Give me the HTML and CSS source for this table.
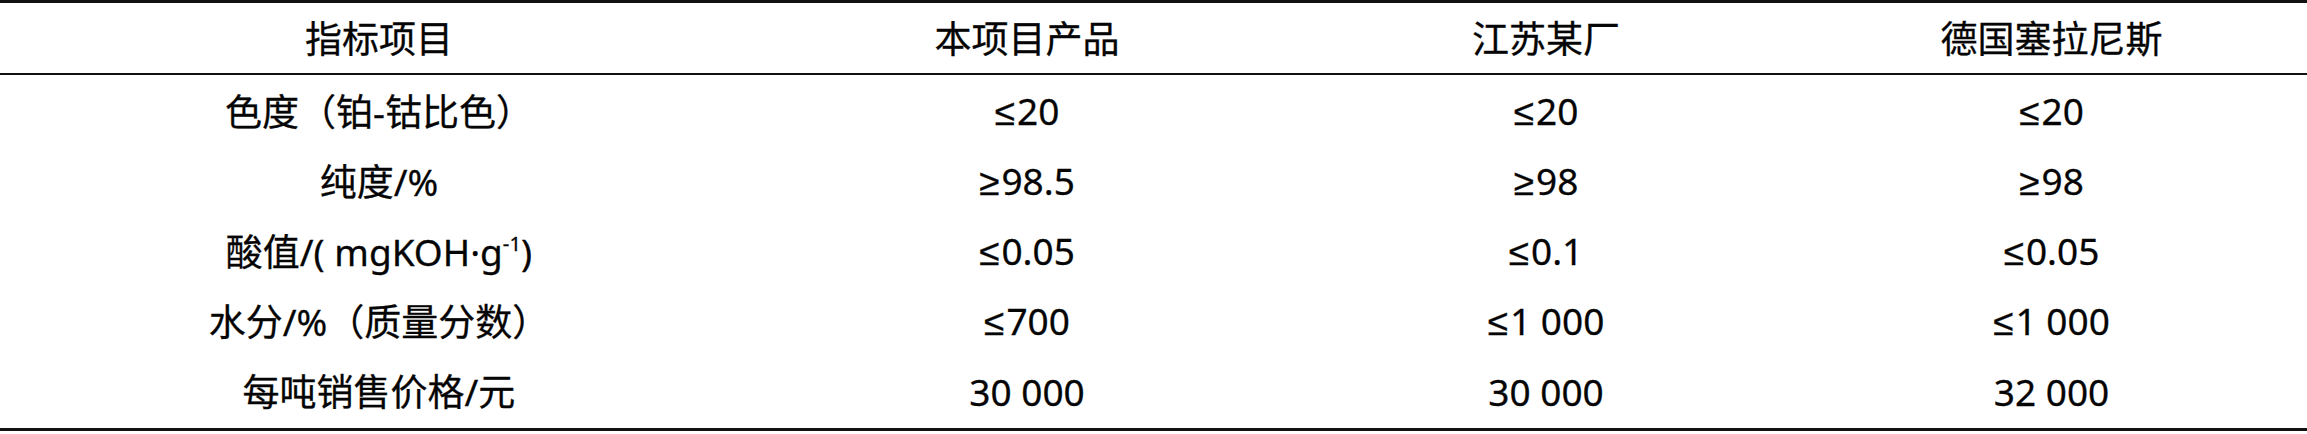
FILE: index.html
```html
<!DOCTYPE html>
<html lang="zh-CN">
<head>
<meta charset="utf-8">
<title>指标对比</title>
<link rel="stylesheet" href="styles.css">
</head>
<body>
<div class="table">
  <div class="row head">
    <div class="cell">指标项目</div>
    <div class="cell">本项目产品</div>
    <div class="cell">江苏某厂</div>
    <div class="cell">德国塞拉尼斯</div>
  </div>
  <div class="body">
    <div class="row">
      <div class="cell">色度（铂-钴比色）</div>
      <div class="cell"><span class="op">≤</span>20</div>
      <div class="cell"><span class="op">≤</span>20</div>
      <div class="cell"><span class="op">≤</span>20</div>
    </div>
    <div class="row">
      <div class="cell">纯度/%</div>
      <div class="cell"><span class="op">≥</span>98.5</div>
      <div class="cell"><span class="op">≥</span>98</div>
      <div class="cell"><span class="op">≥</span>98</div>
    </div>
    <div class="row">
      <div class="cell">酸值/( mgKOH·g<span class="sup">-1</span>)</div>
      <div class="cell"><span class="op">≤</span>0.05</div>
      <div class="cell"><span class="op">≤</span>0.1</div>
      <div class="cell"><span class="op">≤</span>0.05</div>
    </div>
    <div class="row">
      <div class="cell">水分/%（质量分数）</div>
      <div class="cell"><span class="op">≤</span>700</div>
      <div class="cell"><span class="op">≤</span>1 000</div>
      <div class="cell"><span class="op">≤</span>1 000</div>
    </div>
    <div class="row">
      <div class="cell">每吨销售价格/元</div>
      <div class="cell">30 000</div>
      <div class="cell">30 000</div>
      <div class="cell">32 000</div>
    </div>
  </div>
</div>
</body>
</html>
```
FILE: styles.css
```css
html, body {
  margin: 0;
  padding: 0;
  background: #ffffff;
}

body {
  font-family: "Noto Sans", "Noto Sans CJK SC", sans-serif;
  font-size: 37px;
  color: #050505;
}

.table {
  width: 2307px;
  border-top: 3px solid #111;
  border-bottom: 3px solid #111;
  padding-bottom: 2px;
  box-sizing: border-box;
}

.row {
  display: grid;
  grid-template-columns: 758px 538px 500px 1fr;
  height: 70px;
  align-items: center;
}

.head {
  border-bottom: 2px solid #111;
}

.body .row:first-child {
  margin-top: 1px;
}

.cell {
  text-align: center;
  white-space: nowrap;
  line-height: 1;
  -webkit-text-stroke: 0.3px #050505;
}

.op {
  font-family: "Liberation Sans", "DejaVu Sans", sans-serif;
  padding-right: 2px;
}

.sup {
  font-size: 0.55em;
  vertical-align: 0.75em;
  line-height: 0;
}
```
